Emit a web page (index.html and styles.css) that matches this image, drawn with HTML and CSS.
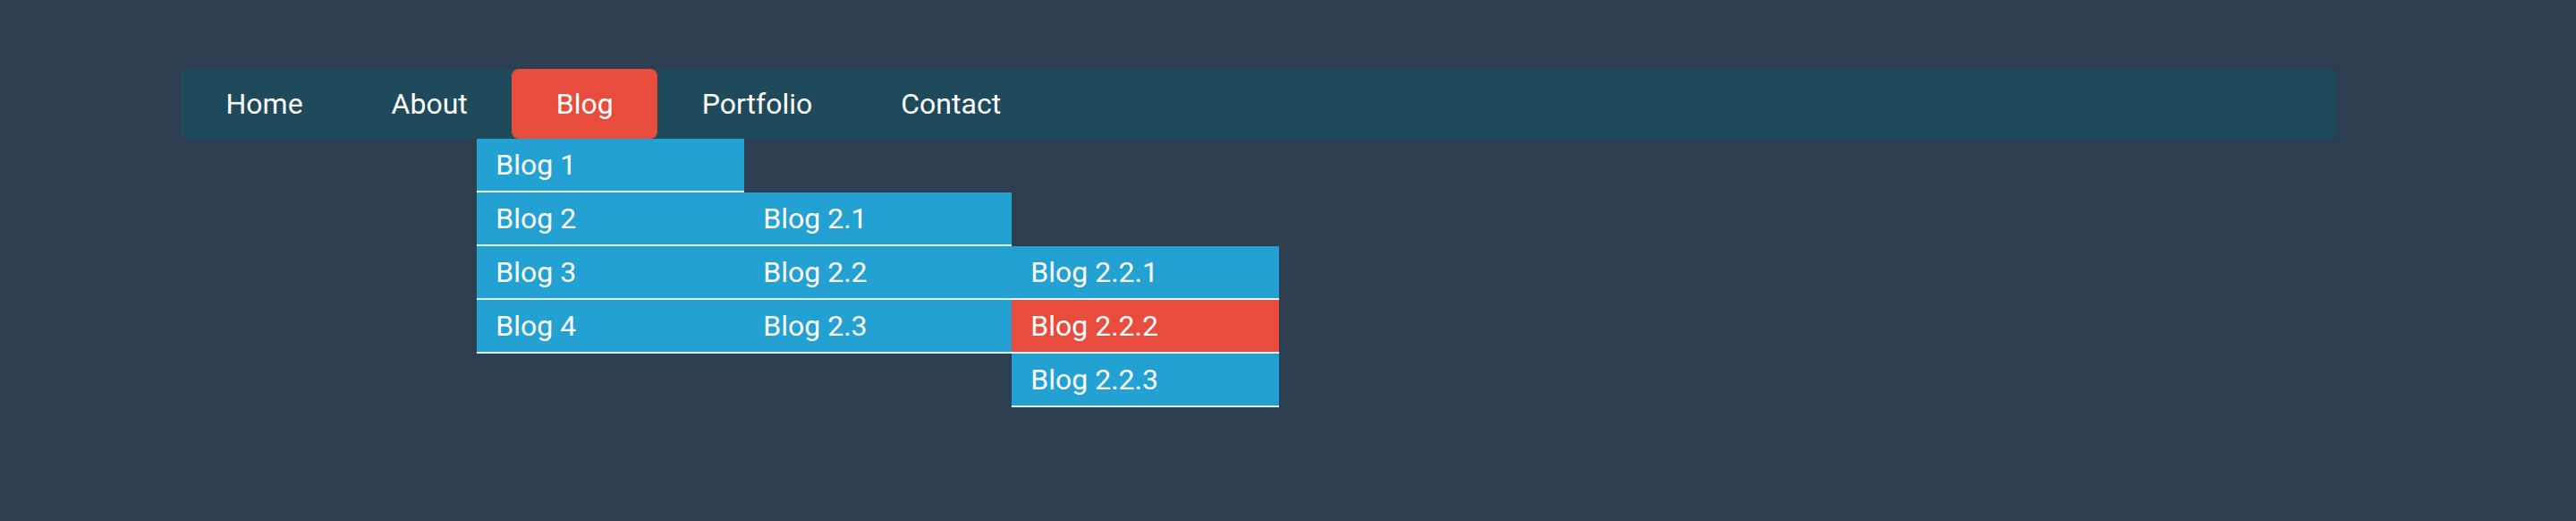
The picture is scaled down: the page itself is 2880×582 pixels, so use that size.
FILE: index.html
```html
<!DOCTYPE html>
<html lang="en">
<head>
<meta charset="utf-8">
<title>Menu</title>
<link rel="stylesheet" href="styles.css">
</head>
<body>
<div class="page">
  <nav class="nav">
    <ul class="menu">
      <li class="menu-item"><a class="menu-link" href="#">Home</a></li>
      <li class="menu-item"><a class="menu-link" href="#">About</a></li>
      <li class="menu-item">
        <a class="menu-link active" href="#">Blog</a>
        <ul class="sub sub-first">
          <li class="sub-item"><a class="sub-link" href="#">Blog 1</a></li>
          <li class="sub-item">
            <a class="sub-link" href="#">Blog 2</a>
            <ul class="sub sub-side">
              <li class="sub-item"><a class="sub-link" href="#">Blog 2.1</a></li>
              <li class="sub-item">
                <a class="sub-link" href="#">Blog 2.2</a>
                <ul class="sub sub-side">
                  <li class="sub-item"><a class="sub-link" href="#">Blog 2.2.1</a></li>
                  <li class="sub-item"><a class="sub-link hover" href="#">Blog 2.2.2</a></li>
                  <li class="sub-item"><a class="sub-link" href="#">Blog 2.2.3</a></li>
                </ul>
              </li>
              <li class="sub-item"><a class="sub-link" href="#">Blog 2.3</a></li>
            </ul>
          </li>
          <li class="sub-item"><a class="sub-link" href="#">Blog 3</a></li>
          <li class="sub-item"><a class="sub-link" href="#">Blog 4</a></li>
        </ul>
      </li>
      <li class="menu-item"><a class="menu-link" href="#">Portfolio</a></li>
      <li class="menu-item"><a class="menu-link" href="#">Contact</a></li>
    </ul>
  </nav>
</div>
</body>
</html>
```
FILE: styles.css
```css
html, body {
  margin: 0;
  padding: 0;
}
body {
  background: #2d3e50;
  font-family: Roboto, "Liberation Sans", sans-serif;
  width: 2880px;
  height: 582px;
  overflow: hidden;
}
.page {
  padding: 77px 0 0 203px;
}
.nav {
  width: 2409px;
  height: 78px;
  background: #1f4a5b;
  border-radius: 6px;
}
.menu {
  list-style: none;
  margin: 0;
  padding: 0;
  display: flex;
  height: 78px;
}
.menu-item {
  position: relative;
}
.menu-link {
  display: block;
  padding: 0 49.5px;
  height: 78px;
  line-height: 78px;
  color: #ffffff;
  text-decoration: none;
  font-size: 32px;
  border-radius: 8px;
}
.menu-link.active {
  background: #e74c3c;
}
.sub {
  list-style: none;
  margin: 0;
  padding: 0;
  width: 299px;
  position: absolute;
}
.sub-first {
  top: 100%;
  left: -39px;
}
.sub-side {
  top: 0;
  left: 100%;
}
.sub-item {
  position: relative;
  border-bottom: 2px solid #e3f3fa;
}
.sub-link {
  display: block;
  height: 58px;
  line-height: 58px;
  padding-left: 21px;
  background: #23a1d3;
  color: #ffffff;
  text-decoration: none;
  font-size: 32px;
}
.sub-link.hover {
  background: #e74c3c;
}
```
